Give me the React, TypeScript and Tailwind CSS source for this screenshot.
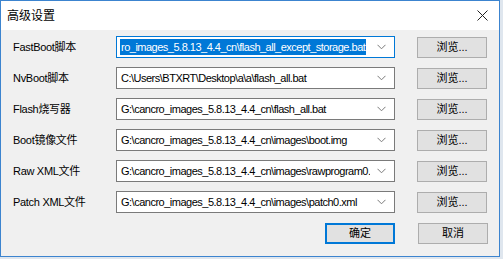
import React from "react";

const font = { fontFamily: '"Liberation Sans", "Noto Sans CJK SC", sans-serif' };

function Chevron() {
  return (
    <svg width="9" height="6" viewBox="0 0 9 6" className="shrink-0">
      <path d="M0.5 0.8 L4.5 4.8 L8.5 0.8" fill="none" stroke="#7a7a7a" strokeWidth="1" />
    </svg>
  );
}

function Combo({ value, selected }: { value: string; selected?: boolean }) {
  return (
    <div
      className={`w-[279px] h-[22px] bg-white flex items-center pl-[3px] pr-[6px] border ${
        selected ? "border-[#0078d7]" : "border-[#7a7a7a]"
      }`}
    >
      <div className="flex-1 overflow-hidden whitespace-nowrap tracking-[-0.5px]">
        {selected ? (
          <span className="bg-[#0078d7] text-white px-[1px] inline-block leading-[16px]">{value}</span>
        ) : (
          <span className="text-black px-[1px] leading-[16px]">{value}</span>
        )}
      </div>
      <div className="w-[14px] flex justify-center ml-[4px]">
        <Chevron />
      </div>
    </div>
  );
}

function Btn({ label, def }: { label: string; def?: boolean }) {
  return (
    <div
      className={`w-[70px] h-[21px] flex items-center justify-center text-black bg-[#e1e1e1] ${
        def ? "border-2 border-[#0078d7]" : "border border-[#adadad]"
      }`}
    >
      {label}
    </div>
  );
}

const rows = [
  { label: "FastBoot脚本", value: "ro_images_5.8.13_4.4_cn\\flash_all_except_storage.bat", selected: true },
  { label: "NvBoot脚本", value: "C:\\Users\\BTXRT\\Desktop\\a\\a\\flash_all.bat" },
  { label: "Flash烧写器", value: "G:\\cancro_images_5.8.13_4.4_cn\\flash_all.bat" },
  { label: "Boot镜像文件", value: "G:\\cancro_images_5.8.13_4.4_cn\\images\\boot.img" },
  { label: "Raw XML文件", value: "G:\\cancro_images_5.8.13_4.4_cn\\images\\rawprogram0.xml" },
  { label: "Patch XML文件", value: "G:\\cancro_images_5.8.13_4.4_cn\\images\\patch0.xml" },
];

export default function App() {
  return (
    <div className="w-[503px] h-[259px] bg-[#dfe6ee] overflow-hidden text-[11px]" style={font}>
      <div className="w-[500px] h-[257px] border border-[#3c84cf] flex flex-col">
        <div className="h-[29px] bg-white flex items-center justify-between pl-[6px] pr-[11px] shrink-0">
          <span className="text-[12px] text-black">高级设置</span>
          <svg width="11" height="11" viewBox="0 0 11 11">
            <path d="M0.5 0.5 L10.5 10.5 M10.5 0.5 L0.5 10.5" stroke="#222" strokeWidth="1" />
          </svg>
        </div>
        <div className="flex-1 bg-[#f0f0f0] pt-[6px] pl-[11px] flex flex-col gap-[9px]">
          {rows.map((r) => (
            <div key={r.label} className="flex items-center h-[22px]">
              <div className="w-[104px] text-black whitespace-nowrap tracking-[-0.3px] pl-[1px]">{r.label}</div>
              <Combo value={r.value} selected={r.selected} />
              <div className="ml-[22px]">
                <Btn label="浏览..." />
              </div>
            </div>
          ))}
          <div className="flex items-center h-[22px] justify-end pr-[11px] gap-[23px]">
            <Btn label="确定" def />
            <Btn label="取消" />
          </div>
        </div>
      </div>
    </div>
  );
}
